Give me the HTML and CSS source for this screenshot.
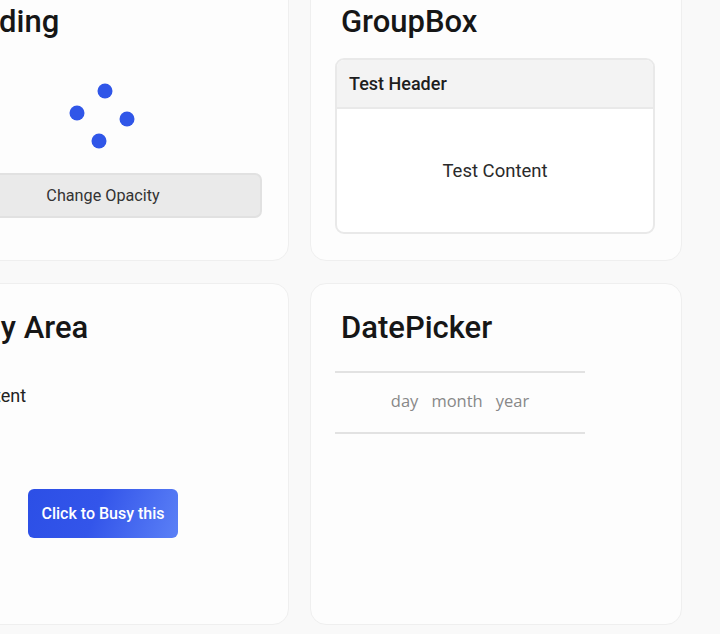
FILE: index.html
```html
<!DOCTYPE html>
<html lang="en">
<head>
<meta charset="utf-8">
<title>Components</title>
<link rel="stylesheet" href="styles.css">
</head>
<body>
<div class="grid">
  <section class="card">
    <h2 class="title">Loading</h2>
    <div class="spinner">
      <svg width="70" height="70" viewBox="0 0 70 70">
        <circle cx="38" cy="10" r="7.5" fill="#3056e8"/>
        <circle cx="10" cy="32" r="7.5" fill="#3056e8"/>
        <circle cx="60" cy="38" r="7.5" fill="#3056e8"/>
        <circle cx="32" cy="60" r="7.5" fill="#3056e8"/>
      </svg>
    </div>
    <button class="btn-gray">Change Opacity</button>
  </section>
  <section class="card">
    <h2 class="title">GroupBox</h2>
    <div class="groupbox">
      <div class="gb-header">Test Header</div>
      <div class="gb-content">Test Content</div>
    </div>
  </section>
  <section class="card">
    <h2 class="title">Busy Area</h2>
    <div class="busy-content">Content</div>
    <div class="busy-actions">
      <button class="btn-blue">Click to Busy this</button>
    </div>
  </section>
  <section class="card">
    <h2 class="title">DatePicker</h2>
    <div class="datepicker">
      <span>day</span><span>month</span><span>year</span>
    </div>
  </section>
</div>
</body>
</html>
```
FILE: styles.css
```css
* { box-sizing: border-box; }
html, body { margin: 0; padding: 0; }
body {
  background: #f9f9f9;
  font-family: Roboto, "Liberation Sans", sans-serif;
  color: #1a1a1a;
  width: 720px;
  height: 634px;
  overflow: hidden;
}
.grid {
  display: grid;
  grid-template-columns: 372px 372px;
  grid-template-rows: 284px 342px;
  column-gap: 21px;
  row-gap: 22px;
  margin-left: -83px;
  margin-top: -23px;
}
.card {
  background: #fdfdfd;
  border: 1px solid #efefef;
  border-radius: 16px;
  padding: 25px 26px 0 24px;
  display: flex;
  flex-direction: column;
}
.card > * { flex-shrink: 0; }
.title {
  margin: 0;
  padding-left: 6px;
  font-size: 31px;
  font-weight: 500;
  line-height: 37px;
  color: #161616;
}
.spinner {
  align-self: center;
  width: 70px;
  height: 70px;
  margin-top: 41px;
}
.spinner svg { display: block; }
.btn-gray {
  margin-top: 22px;
  height: 45px;
  width: 100%;
  padding: 0 0 0 2px;
  background: #eaeaea;
  border: 2px solid #e1e1e1;
  border-radius: 7px;
  font-family: Roboto, sans-serif;
  font-size: 16.2px;
  color: #333;
}
.groupbox {
  margin-top: 18px;
  width: 320px;
  border: 2px solid #e9e9e9;
  border-radius: 9px;
  overflow: hidden;
  background: #fff;
}
.gb-header {
  height: 49px;
  background: #f3f3f3;
  border-bottom: 2px solid #e9e9e9;
  padding: 0 12px;
  display: flex;
  align-items: center;
  font-size: 18px;
  font-weight: 500;
  color: #1e1e1e;
}
.gb-content {
  height: 123px;
  display: flex;
  align-items: center;
  justify-content: center;
  font-size: 18.5px;
  color: #2a2a2a;
}
.busy-content {
  margin-top: 39px;
  padding-left: 21px;
  font-size: 18px;
  color: #222;
}
.busy-actions {
  display: flex;
  justify-content: center;
  padding-left: 2px;
  margin-top: 83px;
}
.btn-blue {
  width: 150px;
  height: 49px;
  border: none;
  border-radius: 6px;
  background: linear-gradient(110deg, #2c4fe6 0%, #3355ea 45%, #5b80f6 100%);
  color: #fff;
  font-family: Roboto, sans-serif;
  font-size: 16px;
  font-weight: 500;
}
.datepicker {
  margin-top: 25px;
  width: 250px;
  height: 63px;
  padding-bottom: 4px;
  border-top: 2px solid #e2e2e2;
  border-bottom: 2px solid #e2e2e2;
  display: flex;
  align-items: center;
  justify-content: center;
  gap: 13px;
  font-family: "Open Sans", sans-serif;
  font-size: 16.5px;
  color: #888;
}
```
